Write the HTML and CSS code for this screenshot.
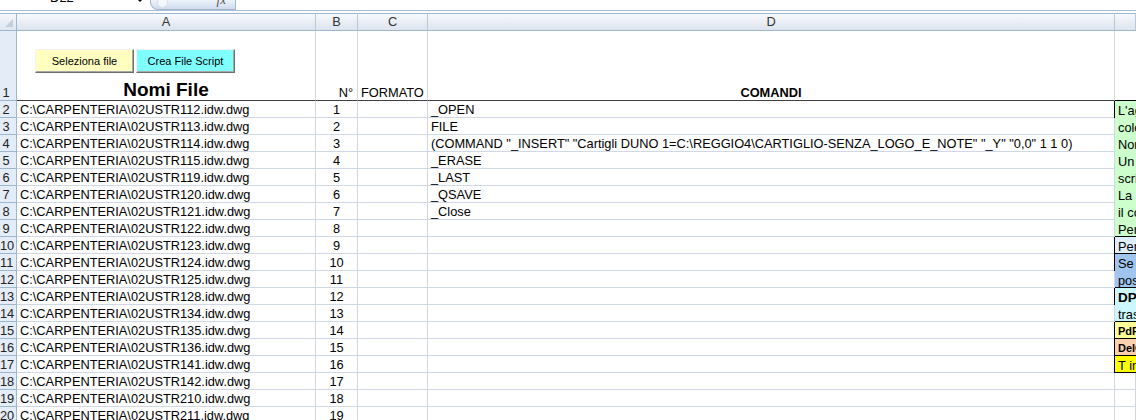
FILE: index.html
```html
<!DOCTYPE html>
<html lang="it">
<head>
<meta charset="utf-8">
<title>Foglio</title>
<link rel="stylesheet" href="styles.css">
</head>
<body>
<div class="topbar">
  <div class="namebox"><span class="nb-text">D22</span><span class="nb-arrow"></span></div>
  <div class="fxbox"><span class="fx-ghost"></span><span class="fx">fx</span></div>
</div>
<div class="sheet">
  <div class="corner"><svg width="16" height="17" viewBox="0 0 16 17"><polygon points="13,5 13,13 5,13" fill="#c3cfde"/></svg></div>
  <div class="h">A</div><div class="h">B</div><div class="h">C</div><div class="h">D</div><div class="h"></div>

  <div class="rh rh1">1</div>
  <div class="c r1 a1">
    <div class="btns"><span class="btn btn-y">Seleziona file</span><span class="btn btn-c">Crea File Script</span></div>
    <div class="title">Nomi File</div>
  </div>
  <div class="c r1 bot right">N°</div>
  <div class="c r1 bot">FORMATO</div>
  <div class="c r1 bot center bold">COMANDI</div>
  <div class="c r1 e0"></div>

  <div class="rh">2</div><div class="c">C:\CARPENTERIA\02USTR112.idw.dwg</div><div class="c center">1</div><div class="c"></div><div class="c">_OPEN</div>
  <div class="e green span8"><div>L'aggiunta delle</div><div>colonne</div><div>Non modificare</div><div>Un &nbsp;file</div><div>scritto</div><div>La &nbsp;riga</div><div>il comando</div><div>Per eseguire</div></div>
  <div class="rh">3</div><div class="c">C:\CARPENTERIA\02USTR113.idw.dwg</div><div class="c center">2</div><div class="c"></div><div class="c">FILE</div>
  <div class="rh">4</div><div class="c">C:\CARPENTERIA\02USTR114.idw.dwg</div><div class="c center">3</div><div class="c"></div><div class="c">(COMMAND "_INSERT" "Cartigli DUNO 1=C:\REGGIO4\CARTIGLIO-SENZA_LOGO_E_NOTE" "_Y" "0,0" 1 1 0)</div>
  <div class="rh">5</div><div class="c">C:\CARPENTERIA\02USTR115.idw.dwg</div><div class="c center">4</div><div class="c"></div><div class="c">_ERASE</div>
  <div class="rh">6</div><div class="c">C:\CARPENTERIA\02USTR119.idw.dwg</div><div class="c center">5</div><div class="c"></div><div class="c">_LAST</div>
  <div class="rh">7</div><div class="c">C:\CARPENTERIA\02USTR120.idw.dwg</div><div class="c center">6</div><div class="c"></div><div class="c">_QSAVE</div>
  <div class="rh">8</div><div class="c">C:\CARPENTERIA\02USTR121.idw.dwg</div><div class="c center">7</div><div class="c"></div><div class="c">_Close</div>
  <div class="rh">9</div><div class="c">C:\CARPENTERIA\02USTR122.idw.dwg</div><div class="c center">8</div><div class="c"></div><div class="c"></div>
  <div class="rh">10</div><div class="c">C:\CARPENTERIA\02USTR123.idw.dwg</div><div class="c center">9</div><div class="c"></div><div class="c"></div>
  <div class="e pale"><div>Per avviare</div></div>
  <div class="rh">11</div><div class="c">C:\CARPENTERIA\02USTR124.idw.dwg</div><div class="c center">10</div><div class="c"></div><div class="c"></div>
  <div class="e blue span2"><div>Se necessario</div><div>possibile</div></div>
  <div class="rh">12</div><div class="c">C:\CARPENTERIA\02USTR125.idw.dwg</div><div class="c center">11</div><div class="c"></div><div class="c"></div>
  <div class="rh">13</div><div class="c">C:\CARPENTERIA\02USTR128.idw.dwg</div><div class="c center">12</div><div class="c"></div><div class="c"></div>
  <div class="e cyan span2"><div class="dp">DP</div><div>trasforma</div></div>
  <div class="rh">14</div><div class="c">C:\CARPENTERIA\02USTR134.idw.dwg</div><div class="c center">13</div><div class="c"></div><div class="c"></div>
  <div class="rh">15</div><div class="c">C:\CARPENTERIA\02USTR135.idw.dwg</div><div class="c center">14</div><div class="c"></div><div class="c"></div>
  <div class="e lyellow"><div class="small">PdF</div></div>
  <div class="rh">16</div><div class="c">C:\CARPENTERIA\02USTR136.idw.dwg</div><div class="c center">15</div><div class="c"></div><div class="c"></div>
  <div class="e peach"><div class="small">DelCad</div></div>
  <div class="rh">17</div><div class="c">C:\CARPENTERIA\02USTR141.idw.dwg</div><div class="c center">16</div><div class="c"></div><div class="c"></div>
  <div class="e yellow"><div>T in</div></div>
  <div class="rh">18</div><div class="c">C:\CARPENTERIA\02USTR142.idw.dwg</div><div class="c center">17</div><div class="c"></div><div class="c"></div><div class="c"></div>
  <div class="rh">19</div><div class="c">C:\CARPENTERIA\02USTR210.idw.dwg</div><div class="c center">18</div><div class="c"></div><div class="c"></div><div class="c"></div>
  <div class="rh">20</div><div class="c">C:\CARPENTERIA\02USTR211.idw.dwg</div><div class="c center">19</div><div class="c"></div><div class="c"></div><div class="c"></div>
</div>
</body>
</html>
```
FILE: styles.css
```css
html, body {
  margin: 0;
  padding: 0;
  background: #fff;
  overflow: hidden;
}
body {
  font-family: "Liberation Sans", Arial, sans-serif;
  font-size: 12.8px;
  color: #000;
  width: 1136px;
  height: 420px;
}

/* formula bar strip */
.topbar {
  display: flex;
  height: 10px;
  border-bottom: 1px solid #a9bbd1;
  margin-bottom: 2px;
  overflow: hidden;
  background: #fff;
}
.namebox {
  width: 146px;
  display: flex;
  align-items: flex-start;
}
.nb-text {
  font-size: 13px;
  line-height: 13px;
  margin-top: -9px;
  margin-left: 50px;
}
.nb-arrow {
  margin-left: auto;
  margin-right: 4px;
  width: 0;
  height: 0;
  border-left: 2px solid transparent;
  border-right: 2px solid transparent;
  border-top: 2px solid #000;
}
.fxbox {
  margin-left: 4px;
  width: 84px;
  height: 9px;
  border: 1px solid #a4b7cf;
  border-top: none;
  border-bottom-left-radius: 8px;
  background: linear-gradient(#eef3fa, #cddbee);
  display: flex;
  overflow: hidden;
}
.fx-ghost {
  width: 9px;
  height: 9px;
  margin-top: -3px;
  margin-left: 6px;
  border-radius: 50%;
  background: #f4f7fb;
  border: 1px solid #d5dfec;
}
.fx {
  margin-left: auto;
  margin-right: 9px;
  margin-top: -7px;
  font-family: "Liberation Serif", serif;
  font-style: italic;
  font-size: 13px;
  line-height: 13px;
  color: #555;
}

/* grid */
.sheet {
  display: grid;
  grid-template-columns: 17px 299px 42px 70px 687px 21px;
  grid-template-rows: 18px 70px repeat(19, 17px);
}
.corner {
  background: linear-gradient(#f4f7fb, #dfe6f0);
  border-top: 1px solid #9eb6ce;
  border-bottom: 1px solid #9eb6ce;
  border-right: 1px solid #9eb6ce;
  box-sizing: border-box;
}
.corner svg { display: block; }
.h {
  background: linear-gradient(#f7f9fc, #dde4ee);
  border-top: 1px solid #9eb6ce;
  border-bottom: 1px solid #9eb6ce;
  border-right: 1px solid #b9c9db;
  text-align: center;
  line-height: 16px;
  color: #333;
  overflow: hidden;
}
.rh {
  background: #e4ecf7;
  border-right: 1px solid #9eb6ce;
  border-bottom: 1px solid #9eb6ce;
  text-align: center;
  padding: 2px 4px 0 0;
  line-height: 14px;
  color: #222;
  white-space: nowrap;
  overflow: hidden;
}
.rh1 {
  display: flex;
  align-items: flex-end;
  justify-content: center;
  padding: 0 4px 0 0;
  line-height: 15px;
}
.c {
  border-right: 1px solid #d0d7e5;
  border-bottom: 1px solid #d0d7e5;
  padding: 2px 3px 0;
  line-height: 14px;
  white-space: nowrap;
  overflow: hidden;
}
.center { text-align: center; }
.right { text-align: right; }
.bold { font-weight: bold; }
.r1 { border-bottom-color: #3f3f3f; }
.bot {
  display: flex;
  align-items: flex-end;
  padding: 0 3px;
  line-height: 15px;
}
.bot.right { justify-content: flex-end; padding-right: 4px; }
.bot.center { justify-content: center; }
.e0 { border-bottom: 1px solid #000; border-right: none; }

.a1 {
  display: flex;
  flex-direction: column;
  padding: 0;
}
.btns {
  display: flex;
  gap: 2px;
  margin-top: 18px;
  margin-left: 18px;
}
.btn {
  width: 99px;
  height: 24px;
  box-sizing: border-box;
  display: flex;
  align-items: center;
  justify-content: center;
  font-size: 11px;
  border: 1px solid;
  border-color: #f2f2f2 #6e6e6e #6e6e6e #f2f2f2;
  box-shadow: inset -1px -1px 0 #a8a8a8;
}
.btn-y { background: #ffffc0; }
.btn-c { background: #80ffff; }
.title {
  margin-top: auto;
  text-align: center;
  font-weight: bold;
  font-size: 19px;
  line-height: 20px;
}

/* column E notes */
.e {
  border-bottom: 1px solid #000;
  box-shadow: -1px 0 0 #000;
  overflow: hidden;
  white-space: nowrap;
  padding: 1px 0 0 3px;
}
.e > div { line-height: 17px; height: 17px; }
.span8 { grid-row: span 8; }
.span2 { grid-row: span 2; }
.green { background: #ccffcc; }
.pale { background: #dfeefb; }
.blue { background: #9fc4ee; }
.cyan { background: #ccf7fd; }
.lyellow { background: #ffff99; }
.peach { background: #fcd2ae; }
.yellow { background: #ffff00; }
.dp { font-weight: bold; font-size: 13.5px; }
.small { font-weight: bold; font-size: 11px; }
```
